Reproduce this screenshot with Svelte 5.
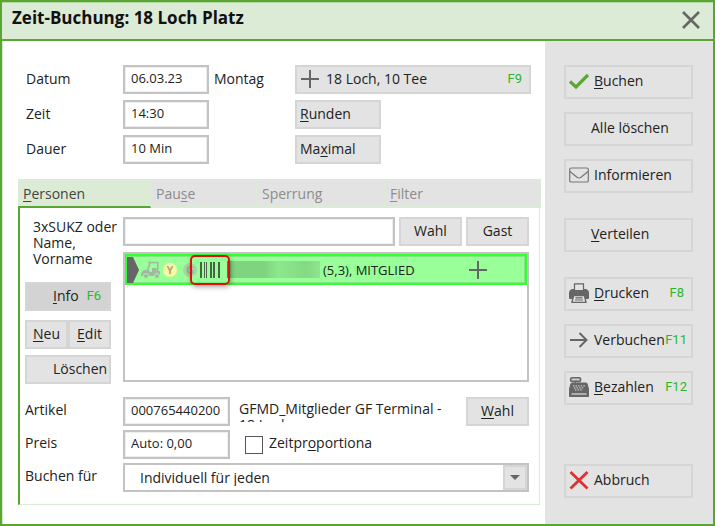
<!--
	Dialog for booking a tee time
-->
<script>
	let datum = $state('06.03.23');
	let zeit = $state('14:30');
	let dauer = $state('10 Min');
	let suche = $state('');
	let artikel = $state('000765440200');
	let preis = $state('Auto: 0,00');
	let proportional = $state(false);
	let tab = $state(0);

	// before / key / after : the key is the underlined access letter
	const tabs = [
		['', 'P', 'ersonen'],
		['Pau', 's', 'e'],
		['Sperrun', 'g', ''],
		['', 'F', 'ilter']
	];

	const groups = [
		[
			{ icon: 'check', key: 'B', text: 'uchen' },
			{ text: 'Alle löschen' },
			{ icon: 'mail', text: 'Informieren' }
		],
		[{ key: 'V', text: 'erteilen' }],
		[
			{ icon: 'print', key: 'D', text: 'rucken', fn: 'F8' },
			{ icon: 'arrow', text: 'Verbuchen', fn: 'F11' },
			{ icon: 'till', key: 'B', text: 'ezahlen', fn: 'F12' }
		],
		[{ icon: 'cancel', text: 'Abbruch' }]
	];
</script>

{#snippet plus()}
	<svg class="plus" width="18" height="18" viewBox="0 0 18 18" aria-hidden="true">
		<path d="M9 0v18M0 9h18" stroke="#666" stroke-width="2" />
	</svg>
{/snippet}

{#snippet icon(name)}
	<svg width="20" height="20" viewBox="0 0 20 20" fill="none" aria-hidden="true">
		{#if name === 'check'}
			<path d="M1 10.5l6 5.5L19 4" stroke="#5aa832" stroke-width="3.2" />
		{:else if name === 'mail'}
			<rect x=".7" y="3" width="18.6" height="14" rx="1.6" stroke="#777" stroke-width="1.2" />
			<path d="M1 6.5l7 5.8q2 1.4 4 0l7-5.8" stroke="#777" stroke-width="1.2" />
		{:else if name === 'print'}
			<path d="M3 6h14q3 1 3 4v5q0 1-1 1H1q-1 0-1-1v-5q0-3 3-4z" fill="#666" />
			<path d="M5.500 7.500V.8h9v6.700z" fill="#e3e3e3" stroke="#666" stroke-width="1.200" />
			<path d="M4.500 12.500h11l1.500 7H3z" fill="#e3e3e3" stroke="#666" stroke-width="1.400" />
			<path d="M6.500 14.800h7M6 17h8" stroke="#666" stroke-width="1.200" />
		{:else if name === 'arrow'}
			<path d="M1 10h16M10.500 3l7 7-7 7" stroke="#666" stroke-width="2" />
		{:else if name === 'till'}
			<rect x="1.600" y=".8" width="10" height="3.600" rx="1.500" fill="#ccc" stroke="#666" stroke-width="1.600" />
			<path d="M6.500 4.500v2M3 6h14q1 0 1.200 1L20 14v4.500q0 1.500-1.500 1.500h-17Q0 20 0 18.500V14l1.800-7Q2 6 3 6z" fill="#666" stroke="#666" stroke-width="1" />
			<path d="M4 8.800h12M5 10.900h10M6 12.900h8" stroke="#ccc" stroke-width="1.200" stroke-dasharray="1.400 1.200" />
			<path d="M2.500 17h15" stroke="#ddd" stroke-width="1.200" />
		{:else if name === 'cancel'}
			<path d="M1.500 2l17 16.500M18.500 2l-17 16.500" stroke="#e03030" stroke-width="2.800" />
		{/if}
	</svg>
{/snippet}

<div class="dialog">
	<header>
		<h1>Zeit-Buchung: 18 Loch Platz</h1>
		<button class="close" aria-label="Schließen">
			<svg width="18" height="18" viewBox="0 0 18 18"><path d="M1 1l16 16M17 1L1 17" stroke="#666" stroke-width="2.600" /></svg>
		</button>
	</header>

	<div class="body">
		<main>
			<div class="times">
				<label for="datum">Datum</label>
				<input id="datum" bind:value={datum} />
				<span class="day">Montag</span>
				<button class="platz">{@render plus()}<span>18 Loch, 10 Tee</span><kbd>F9</kbd></button>

				<label for="zeit">Zeit</label>
				<input id="zeit" bind:value={zeit} />
				<button class="small"><span><u>R</u>unden</span></button>

				<label for="dauer">Dauer</label>
				<input id="dauer" bind:value={dauer} />
				<button class="small"><span>Ma<u>x</u>imal</span></button>
			</div>

			<div class="tabs" role="tablist">
				{#each tabs as [before, key, after], i}
					<button role="tab" aria-selected={tab === i} class:active={tab === i} onclick={() => (tab = i)}>
						<span>{before}<u>{key}</u>{after}</span>
					</button>
				{/each}
			</div>

			<div class="panel">
				<div class="persons">
					<div class="tools">
						<label for="suche">3xSUKZ oder Name, Vorname</label>
						<button class="info"><span><u>I</u>nfo</span><kbd>F6</kbd></button>
						<div class="pair">
							<button><span><u>N</u>eu</span></button>
							<button><span><u>E</u>dit</span></button>
						</div>
						<button class="delete">Löschen</button>
					</div>

					<div class="result">
						<div class="search">
							<input id="suche" bind:value={suche} />
							<button>Wahl</button>
							<button>Gast</button>
						</div>
						<div class="list">
							<div class="person">
								<svg class="marker" width="12" height="26" viewBox="0 0 12 26" aria-hidden="true"><path d="M0 0h6l6 13-6 13H0z" fill="#666" /></svg>
								<svg class="cart" width="20" height="18" viewBox="0 0 20 18" fill="none" aria-hidden="true">
									<path d="M7 1.500h10.500M9 2L6.500 9.500M17 2l-.5 8" stroke="#a3b8a3" stroke-width="1.600" />
									<path d="M0 14q0-4 4-5l3-.5 2 2.500h2V7h4l1.500 3H19v5H0z" fill="#a3b8a3" />
									<circle cx="5" cy="15" r="2.500" fill="#a3b8a3" stroke="#9f9" />
									<circle cx="16" cy="15" r="2.500" fill="#a3b8a3" stroke="#9f9" />
								</svg>
								<span class="badge yellow">Y</span>
								<span class="badge grey">G</span>
								<span class="code">
									<svg width="20" height="16" viewBox="0 0 20 16" aria-hidden="true">
										<path d="M0 0h2v16H0zM4 0h1v16H4zM6 0h1v16H6zM10 0h2v16h-2zM13 0h2v16h-2zM18 0h2v16h-2z" fill="#4a624a" />
									</svg>
								</span>
								<span class="name"></span>
								<span class="status">(5,3), MITGLIED</span>
								{@render plus()}
							</div>
						</div>
					</div>
				</div>

				<div class="line">
					<label for="artikel">Artikel</label>
					<input id="artikel" bind:value={artikel} />
					<p>GFMD_Mitglieder GF Terminal -<br />18 Loch</p>
					<button class="choose"><span><u>W</u>ahl</span></button>
				</div>
				<div class="line">
					<label for="preis">Preis</label>
					<input id="preis" bind:value={preis} />
					<label class="check"><input type="checkbox" bind:checked={proportional} /><span>Zeitpr<u>o</u>portiona</span></label>
				</div>
				<div class="line">
					<label for="fuer">Buchen für</label>
					<div class="select">
						<select id="fuer"><option>Individuell für jeden</option></select>
						<span class="drop"></span>
					</div>
				</div>
			</div>
		</main>

		<aside>
			{#each groups as group}
				<div class="group">
					{#each group as b}
						<button class:plain={!b.icon}>
							{#if b.icon}{@render icon(b.icon)}{/if}
							<span>{#if b.key}<u>{b.key}</u>{/if}{b.text}</span>
							{#if b.fn}<kbd class:wide={b.fn.length > 2}>{b.fn}</kbd>{/if}
						</button>
					{/each}
				</div>
			{/each}
		</aside>
	</div>
</div>

<style>
	:global(body) {
		margin: 0;
	}

	.dialog {
		display: flex;
		flex-direction: column;
		min-height: 100vh;
		box-sizing: border-box;
		border: 2px solid #59a633;
		background: #fff;
		color: #222;
		font: 14px/16px "Open Sans", "Noto Sans", sans-serif;
	}

	.dialog * {
		box-sizing: border-box;
	}

	header {
		display: flex;
		justify-content: space-between;
		align-items: center;
		height: 39px;
		padding: 0 13px 2px 10px;
		border-top: 1px solid #b5d9a2;
		border-bottom: 2px solid #59a633;
		background: #dcebd5;
	}

	h1 {
		margin: 0;
		padding-bottom: 4px;
		font-size: 17px;
		line-height: 20px;
		font-weight: 700;
		color: #111;
	}

	u {
		text-underline-offset: 2px;
	}

	button, input, select {
		margin: 0;
		font: inherit;
		color: inherit;
	}

	button {
		height: 29px;
		padding: 0 0 2px;
		border: 2px solid #d5d5d5;
		background: #e3e3e3;
		white-space: nowrap;
	}

	button.close {
		display: flex;
		height: 18px;
		padding: 0;
		border: 0;
		background: none;
	}

	input {
		height: 29px;
		min-width: 0;
		padding: 0 6px 4px;
		border: 2px solid #c3c3c3;
		border-radius: 0;
		background: #fff;
		box-shadow: inset 0 0 0 1px #eee;
		font-size: 13px;
	}

	kbd {
		font: 13px/16px "Liberation Sans Narrow", Roboto, sans-serif;
		color: #2db52d;
	}

	svg {
		flex: none;
	}

	.body {
		display: flex;
		flex: 1;
	}

	main {
		flex: 1;
		min-width: 0;
		padding: 24px 4px 19px 15px;
		border-left: 1px solid #d5e8ca;
	}

	.times {
		display: grid;
		grid-template-columns: 97px 86px 86px 1fr;
		gap: 6px 0;
		align-items: center;
		padding: 0 10px 0 8px;
	}

	.times label, .times .day {
		padding-bottom: 2px;
	}

	.times .day {
		padding-left: 5px;
	}

	.times .small {
		grid-column: 4;
		width: 86px;
		padding-left: 3px;
		text-align: left;
	}

	.platz {
		display: flex;
		align-items: center;
		padding: 0 7px 2px 4px;
	}

	.platz span {
		flex: 1;
		padding-left: 7px;
		text-align: left;
	}

	.tabs {
		display: grid;
		grid-template-columns: 133px 106px 128px 1fr;
		margin-top: 15px;
	}

	.tabs button {
		height: 29px;
		padding: 2px 0 0 5px;
		border: 0;
		border-right: 1px solid #dcebd5;
		border-bottom: 2px solid #dcebd5;
		color: #8c8c8c;
		text-align: left;
	}

	.tabs .active {
		border-bottom: 2px solid #59a633;
		background: #dcebd5;
		color: #444;
	}

	.panel {
		margin-right: 1px;
		padding: 9px 10px 12px 5px;
		border: 1px solid #dcebd5;
		border-top: 0;
		border-left: 2px solid #59a633;
	}

	.persons {
		display: flex;
		gap: 5px;
		margin-bottom: 13px;
	}

	.tools {
		display: flex;
		flex-direction: column;
		width: 93px;
	}

	.tools label {
		padding: 2px 0 15px 8px;
	}

	.tools button {
		width: 86px;
	}

	.tools .info {
		display: flex;
		align-items: center;
		gap: 8px;
		padding-left: 26px;
		background: #d3d3d3;
	}

	.pair {
		display: flex;
		width: 86px;
		margin: 9px 0 6px;
	}

	.pair button {
		flex: 1;
	}

	.tools .delete {
		padding-left: 26px;
		text-align: left;
	}

	.result {
		display: flex;
		flex: 1;
		flex-direction: column;
		gap: 6px;
	}

	.search {
		display: flex;
		gap: 4px;
	}

	.search input {
		flex: 1;
	}

	.search button, .choose {
		width: 63px;
	}

	.list {
		flex: 1;
		margin-bottom: 2px;
		border: 2px solid #c3c3c3;
	}

	.person {
		display: flex;
		align-items: center;
		height: 31px;
		padding-right: 38px;
		border: 2px solid #3f3;
		background: #9f9;
		box-shadow: inset 0 0 0 1px #7ee87e;
		font-size: 13px;
	}

	.cart {
		margin: 0 2px;
	}

	.badge {
		width: 14px;
		height: 14px;
		margin-right: 6px;
		border-radius: 50%;
		font-size: 11px;
		line-height: 14px;
		font-weight: 700;
		text-align: center;
	}

	.badge.yellow {
		background: #fbf7a0;
		color: #a9a98a;
	}

	.badge.grey {
		margin-right: 3px;
		background: #a9d3a4;
		color: #8fae8c;
	}

	.code {
		position: relative;
		display: flex;
		margin-right: 7px;
	}

	/* red frame round the bar code, lies over its neighbours */
	.code::after {
		content: "";
		position: absolute;
		inset: -7px -10px;
		border: 2px solid #e01010;
		border-radius: 5px;
		box-shadow: 1px 2px 5px rgba(0, 0, 0, 0.35);
	}

	.name {
		width: 93px;
		height: 17px;
		background: linear-gradient(90deg, #3f7a3f, #80d480 5%, #7fd47f 40%, #8ce88c 55%, #85d985 85%, #8ce68c);
	}

	.status {
		flex: 1;
		padding-left: 3px;
	}

	.line {
		display: flex;
		align-items: center;
		margin-top: 4px;
	}

	.line > label:first-child {
		width: 98px;
		padding-bottom: 4px;
	}

	.line > input {
		width: 107px;
	}

	.line p {
		flex: 1;
		height: 21px;
		margin: 0 0 0 9px;
		overflow: hidden;
		white-space: nowrap;
	}

	.check {
		display: flex;
		align-items: center;
		gap: 6px;
		padding-left: 15px;
	}

	.check span {
		padding-bottom: 4px;
	}

	.check input {
		appearance: none;
		width: 18px;
		height: 18px;
		padding: 0;
		border: 1px solid #555;
		box-shadow: none;
	}

	.check input:checked {
		background: #59a633;
	}

	.select {
		position: relative;
		flex: 1;
	}

	select {
		display: block;
		appearance: none;
		width: 100%;
		height: 29px;
		padding: 0 30px 0 15px;
		border: 2px solid #c3c3c3;
		border-radius: 0;
		background: #fff;
	}

	.drop {
		position: absolute;
		top: 2px;
		right: 2px;
		display: grid;
		place-items: center;
		width: 24px;
		height: 25px;
		border: 2px solid #d5d5d5;
		background: #e3e3e3;
		pointer-events: none;
	}

	.drop::after {
		content: "";
		border: 5px solid transparent;
		border-top-color: #666;
		border-bottom: 0;
	}

	aside {
		width: 168px;
		padding: 24px 20px 19px 19px;
		background: #e3e3e3;
	}

	.group {
		display: flex;
		flex-direction: column;
		gap: 13px;
		margin-bottom: 25px;
	}

	.group:last-child {
		margin: 59px 0 0;
	}

	.group button {
		display: flex;
		align-items: center;
		height: 34px;
		padding: 0 7px 2px 3px;
	}

	.group span {
		flex: 1;
		padding-left: 5px;
		text-align: left;
	}

	.group .plain {
		padding-left: 20px;
	}

	.group .wide {
		margin-right: -3px;
	}
</style>
